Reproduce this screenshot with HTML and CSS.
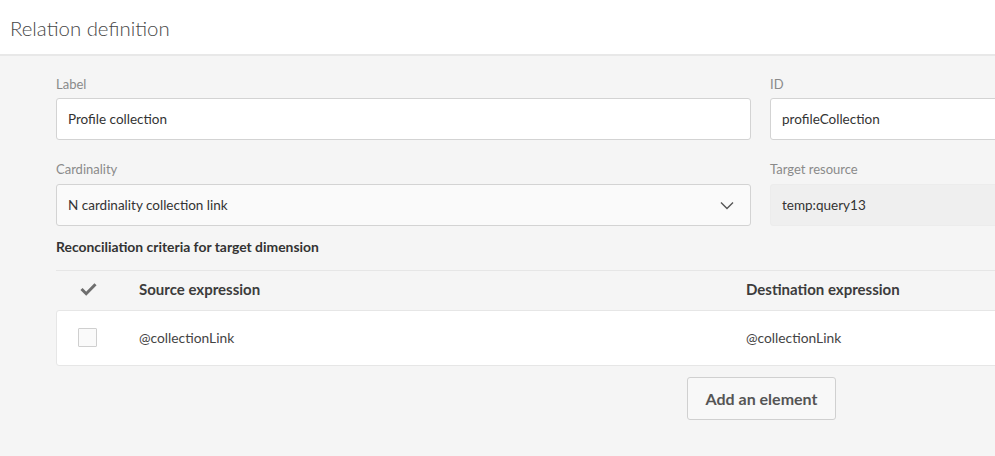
FILE: index.html
```html
<!DOCTYPE html>
<html>
<head>
<meta charset="utf-8">
<link rel="stylesheet" href="styles.css">
</head>
<body>
<header class="topbar">
  <h1 class="title">Relation definition</h1>
</header>
<main class="content">
  <div class="fields">
    <div class="field">
      <div class="field-label">Label</div>
      <div class="input">Profile collection</div>
    </div>
    <div class="field">
      <div class="field-label">ID</div>
      <div class="input">profileCollection</div>
    </div>
    <div class="field">
      <div class="field-label">Cardinality</div>
      <div class="input select">
        <span>N cardinality collection link</span>
        <svg class="chevron" width="14" height="9" viewBox="0 0 14 9"><path d="M1 1.5 L7 7.5 L13 1.5" fill="none" stroke="#555" stroke-width="1.4"/></svg>
      </div>
    </div>
    <div class="field">
      <div class="field-label">Target resource</div>
      <div class="input readonly">temp:query13</div>
    </div>
  </div>
  <div class="section-title">Reconciliation criteria for target dimension</div>
  <div class="table">
    <div class="row head">
      <div class="cell check">
        <svg width="17" height="14" viewBox="0 0 17 14"><path d="M1.5 7 L6.2 11.7 L15.5 2.2" fill="none" stroke="#6e6e6e" stroke-width="3"/></svg>
      </div>
      <div class="cell src">Source expression</div>
      <div class="cell dst">Destination expression</div>
    </div>
    <div class="row data">
      <div class="cell check"><span class="checkbox"></span></div>
      <div class="cell src">@collectionLink</div>
      <div class="cell dst">@collectionLink</div>
    </div>
  </div>
  <div class="actions">
    <button class="btn">Add an element</button>
  </div>
</main>
</body>
</html>
```
FILE: styles.css
```css
html, body {
  margin: 0;
  padding: 0;
}
body {
  width: 995px;
  height: 456px;
  overflow: hidden;
  background: #f5f5f5;
  font-family: "Lato", "Open Sans", sans-serif;
  color: #333;
}
.topbar {
  height: 54px;
  background: #fff;
  border-bottom: 2px solid #e8e8e8;
  display: flex;
  align-items: center;
  padding-left: 10px;
}
.title {
  margin: 0;
  font-size: 20.4px;
  font-weight: 300;
  color: #474747;
  padding-top: 2px;
}
.content {
  padding: 19px 0 0 56px;
  width: 1300px;
}
.fields {
  display: grid;
  grid-template-columns: 695px 300px;
  column-gap: 19px;
  row-gap: 20px;
}
.field-label {
  font-size: 13px;
  line-height: 18px;
  color: #8a8a8a;
  margin-bottom: 5px;
}
.input {
  box-sizing: border-box;
  height: 42px;
  background: #fff;
  border: 1px solid #d3d3d3;
  border-radius: 3px;
  display: flex;
  align-items: center;
  padding: 0 11px;
  font-size: 13.5px;
  color: #333;
}
.field:nth-child(3) .field-label,
.field:nth-child(4) .field-label { margin-bottom: 6px; }
.select {
  background: #fafafa;
  justify-content: space-between;
  padding-right: 16px;
}
.readonly {
  background: #efefef;
  border-color: #ececec;
}
.section-title {
  font-size: 13.9px;
  font-weight: 700;
  color: #333;
  line-height: 18px;
  margin-top: 12px;
}
.table {
  margin-top: 14px;
}
.row {
  display: flex;
  align-items: center;
}
.row.head {
  height: 39px;
  border-top: 1px solid #e6e6e6;
  font-size: 15px;
  font-weight: 700;
  color: #3c3c3c;
}
.row.head .cell { padding-bottom: 3px; }
.row.data {
  box-sizing: border-box;
  height: 56px;
  background: #fff;
  border: 1px solid #e6e6e6;
  border-radius: 3px;
  font-size: 13.8px;
  color: #444;
  padding-bottom: 1px;
}
.cell.check {
  width: 83px;
  display: flex;
  justify-content: center;
  box-sizing: border-box;
}
.row.data .cell.check { width: 82px; }
.cell.src { width: 607px; }
.checkbox {
  display: block;
  width: 19px;
  height: 19px;
  box-sizing: border-box;
  border: 1px solid #cfcfcf;
  background: #fafafa;
  border-radius: 1px;
  margin-left: -21px;
}
.row.head .cell.check svg { margin-left: -18px; }
.actions {
  margin-top: 11px;
  padding-left: 631px;
}
.btn {
  box-sizing: border-box;
  height: 43px;
  width: 149px;
  background: #f8f8f8;
  border: 1px solid #d0d0d0;
  border-radius: 3px;
  font-family: inherit;
  font-size: 16px;
  font-weight: 700;
  color: #555;
  padding: 0;
}
```
